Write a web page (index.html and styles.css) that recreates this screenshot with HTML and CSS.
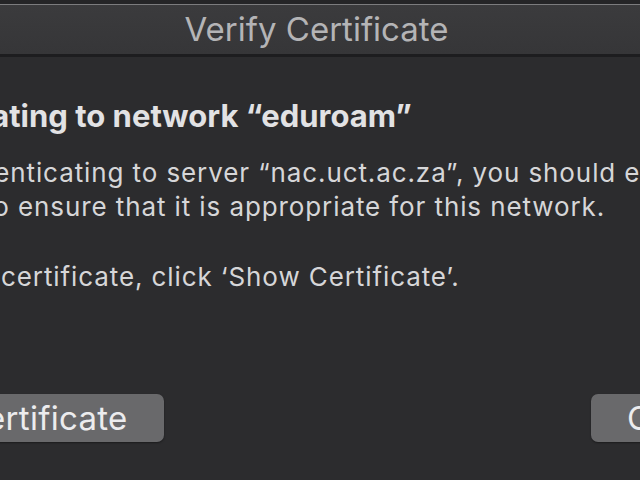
FILE: index.html
```html
<!DOCTYPE html>
<html lang="en">
  <head>
    <meta charset="UTF-8" />
    <meta name="viewport" content="width=device-width, initial-scale=1.0" />
    <title>Verify Certificate</title>
    <link rel="stylesheet" href="styles.css">
  </head>
  <body>
    <div class="window">
      <div class="titlebar">Verify Certificate</div>

      <div class="content">
        <h1 class="heading">Authenticating to network “eduroam”</h1>
        <p class="message">
          Before authenticating to server “nac.uct.ac.za”, you should examine the server's<br />
          certificate to ensure that it is appropriate for this network.
        </p>
        <p class="message">To view the certificate, click ‘Show Certificate’.</p>

        <div class="buttons">
          <button class="button button-show">Show Certificate</button>
          <button class="button">Cancel</button>
        </div>
      </div>
    </div>
  </body>
</html>
```

FILE: styles.css
```css
* {
  margin: 0;
  padding: 0;
  box-sizing: border-box;
}

html,
body {
  height: 100%;
  overflow: hidden;
}

body {
  background: #2c2c2e;
  font-family: Inter, "Noto Sans", sans-serif;
  color: #d6d6d8;
}

.window {
  padding-top: 4px;
  background: #252527;
}

.titlebar {
  height: 53px;
  border-top: 1px solid #7c7c7e;
  border-bottom: 3px solid #1d1d1f;
  background: linear-gradient(#3b3b3d, #363638);
  color: #b4b4b6;
  font-size: 33px;
  line-height: 49px;
  text-align: center;
  padding-right: 7px;
}

/* the dialog is wider than the frame, so its left and right edges are cut */
.content {
  background: #2c2c2e;
  margin-left: -158px;
  width: 931px;
  padding-top: 41px;
}

.heading {
  font-size: 31px;
  line-height: 36px;
  font-weight: 700;
  color: #e2e2e4;
  white-space: nowrap;
  margin-bottom: 22px;
}

.message {
  font-size: 26px;
  line-height: 34px;
  letter-spacing: 0.9px;
  white-space: nowrap;
  margin-bottom: 36px;
}

.buttons {
  display: flex;
  justify-content: space-between;
  margin-top: 100px;
}

.button {
  height: 48px;
  padding: 0 36px;
  border: none;
  border-radius: 7px;
  background: #69696b;
  color: #ececee;
  font-family: inherit;
  font-size: 33px;
  letter-spacing: 0.3px;
  white-space: nowrap;
  box-shadow: 0 1px 2px rgba(0, 0, 0, 0.4);
}

.button-show {
  margin-left: -14px;
}
```
